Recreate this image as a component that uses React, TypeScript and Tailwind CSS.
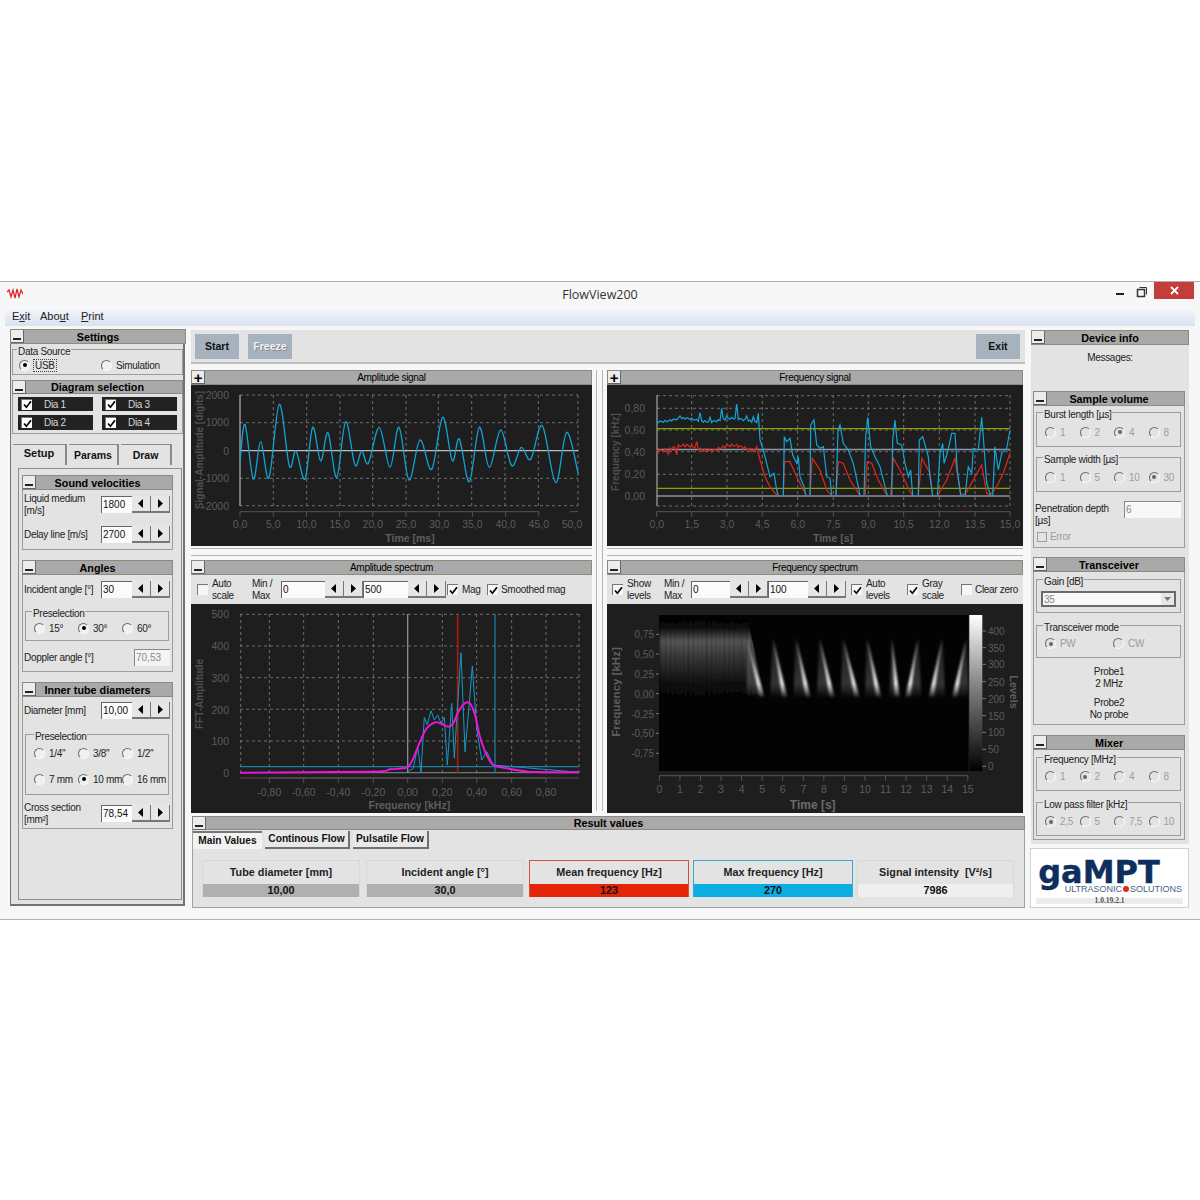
import React from 'react';

type Pt = [number, number];

const panel = 'bg-[#e3e3e3]';

// the plots are drawn in page coordinates, points are read off 3x crops
const fromCrop = (ox: number, oy: number, pts: Pt[]): Pt[] => pts.map(([x, y]) => [x / 3 + ox, y / 3 + oy]);
const line = (pts: Pt[]) => pts.map(([x, y]) => `${x.toFixed(1)},${y.toFixed(1)}`).join(' ');

const smooth = (pts: Pt[]) => {
  let d = `M${pts[0][0].toFixed(1)} ${pts[0][1].toFixed(1)}`;
  for (let i = 0; i < pts.length - 1; i++) {
    const p0 = pts[i - 1] || pts[i];
    const p1 = pts[i];
    const p2 = pts[i + 1];
    const p3 = pts[i + 2] || p2;
    const c1: Pt = [p1[0] + (p2[0] - p0[0]) / 6, p1[1] + (p2[1] - p0[1]) / 6];
    const c2: Pt = [p2[0] - (p3[0] - p1[0]) / 6, p2[1] - (p3[1] - p1[1]) / 6];
    d += `C${c1[0].toFixed(1)} ${c1[1].toFixed(1)} ${c2[0].toFixed(1)} ${c2[1].toFixed(1)} ${p2[0].toFixed(1)} ${p2[1].toFixed(1)}`;
  }
  return d;
};

const noisy = (from: number, to: number, base: number, amp: number, spikes: Pt[] = []): Pt[] => {
  const out: Pt[] = [];
  for (let x = from; x < to; x += 5) {
    const s = spikes.find((p) => Math.abs(p[0] - x) < 3);
    out.push([x, s ? s[1] : base + amp * (Math.sin(x * 1.3) + 0.6 * Math.sin(x * 0.47 + 1))]);
  }
  return out;
};

const ampSignal: Pt[] = [[150,395],[165,283],[190,447],[212,335],[237,443],[268,223],[298,408],[318,363],[345,447],[368,292],[392,393],[414,308],[440,442],[467,275],[495,405],[515,363],[535,400],[568,292],[600,412],[627,292],[657,450],[690,330],[725,418],[758,262],[787,392],[808,327],[838,455],[868,292],[898,412],[932,300],[965,407],[994,352],[1022,388],[1057,287],[1097,458],[1130,307],[1165,432]];

const freqBlue: Pt[] = [
  ...noisy(170, 475, 270, 5, [[240,258],[298,248],[330,262],[365,235],[378,258],[408,222],[440,258],[462,260]]),
  [475,250],[480,330],[490,360],[500,400],[510,440],[522,430],[530,480],[535,498],[550,498],[553,320],[560,335],[570,325],[578,375],[590,400],[595,380],[600,440],[612,470],[618,498],[630,498],[632,285],[642,270],[650,345],[660,355],[670,350],[680,440],[690,445],[695,498],[708,498],[714,300],[720,285],[730,340],[745,360],[760,400],[775,470],[780,498],[792,498],[797,320],[803,262],[812,350],[825,380],[840,410],[855,470],[862,498],[875,498],[878,330],[885,270],[892,340],[905,345],[915,400],[925,440],[932,420],[938,498],[955,498],[958,330],[968,320],[985,380],[990,440],[998,498],[1012,498],[1020,370],[1028,340],[1032,400],[1042,370],[1055,310],[1065,310],[1072,420],[1082,498],[1095,498],[1105,410],[1115,430],[1120,355],[1135,360],[1145,262],[1150,320],[1160,460],[1172,498],[1178,498],[1185,350],[1195,420],[1205,370],[1220,355],[1230,300],
];

const freqRed: Pt[] = [
  ...noisy(170, 470, 354, 8, [[290,335],[232,375],[205,372]]),
  [470,350],[480,390],[495,440],[510,470],[525,490],[535,498],[550,498],[553,395],[570,395],[590,440],[610,480],[620,498],[630,498],[637,385],[660,420],[680,480],[695,498],[708,498],[715,395],[730,400],[750,450],[775,490],[785,498],[795,498],[802,395],[815,400],[835,450],[860,495],[872,498],[880,385],[900,420],[930,485],[940,498],[955,498],[965,385],[990,430],[998,498],[1012,498],[1040,450],[1065,385],[1070,420],[1082,490],[1095,495],[1120,450],[1145,405],[1160,490],[1170,495],[1190,470],[1210,430],[1230,370],
];

const fftMag: Pt[] = [[150,653],[540,650],[600,643],[640,640],[655,635],[670,610],[690,560],[710,520],[735,502],[755,507],[775,515],[790,505],[805,470],[825,445],[840,445],[855,480],[870,545],[890,600],[910,630],[950,640],[1000,648],[1040,651],[1167,652]];
const fftRaw: Pt[] = [[655,650],[670,640],[683,575],[693,653],[703,487],[712,510],[723,467],[733,495],[743,480],[753,505],[763,487],[772,630],[785,445],[793,610],[803,445],[813,293],[825,590],[835,480],[847,333],[860,520],[875,615],[890,590],[910,630],[1167,652]];

// peak, foot and far edge of each pulse in the spectrogram, crop coordinates
const pulses: [number, number, number][] = [[440,490,440],[518,558,510],[587,628,580],[658,700,650],[728,775,722],[800,840,795],[875,895,868],[955,920,965],[1028,990,1036],[1100,1060,1106]];

function Minus() {
  return (
    <div className="w-[13px] h-[13px] bg-[#ececec] border-r border-b border-[#666] flex items-end justify-center pb-[2px] shrink-0">
      <div className="w-[8px] h-[2px] bg-[#222]" />
    </div>
  );
}

function Plus() {
  return <div className="w-[13px] h-[13px] bg-[#ececec] border-r border-b border-[#666] flex items-center justify-center shrink-0 text-[15px] leading-none font-bold text-black">+</div>;
}

function Header({ title, bold = true, plus = false, size = 'h-[15px]' }: { title: string; bold?: boolean; plus?: boolean; size?: string }) {
  return (
    <div className={`${size} bg-[#a9a9a9] border border-[#8f8a80] flex items-center text-black ${bold ? 'font-bold text-[10.8px] tracking-normal' : 'text-[10px]'}`}>
      {plus ? <Plus /> : <Minus />}
      <div className="flex-1 text-center pr-[13px] pt-[1px] leading-none whitespace-nowrap">{title}</div>
    </div>
  );
}

function Radio({ on = false, off = false }: { on?: boolean; off?: boolean }) {
  return (
    <span className={`w-[11px] h-[11px] rounded-full border flex items-center justify-center shrink-0 border-t-[#6a6a6a] border-l-[#6a6a6a] border-r-[#f8f8f8] border-b-[#f8f8f8] ${off ? 'bg-[#e3e3e3]' : 'bg-[#f0f0f0]'}`}>
      {on && <span className={`w-[4px] h-[4px] rounded-full ${off ? 'bg-[#666]' : 'bg-black'}`} />}
    </span>
  );
}

function Option({ label, on = false, off = false, focus = false, w = 'w-[44px]' }: { label: string; on?: boolean; off?: boolean; focus?: boolean; w?: string }) {
  return (
    <div className={`${w} flex items-center gap-[4px] shrink-0 ${off ? 'text-[#9c9c9c]' : 'text-[#222]'}`}>
      <Radio on={on} off={off} />
      <span className={`whitespace-nowrap ${focus ? 'border border-dotted border-[#444] px-[1px] leading-[11px] ml-[-1px]' : ''}`}>{label}</span>
    </div>
  );
}

function Check({ on = true, dark = false }: { on?: boolean; dark?: boolean }) {
  return (
    <span className={`w-[11px] h-[11px] shrink-0 flex items-center justify-center border-t border-l border-[#777] ${dark ? 'bg-white' : 'bg-[#f6f6f6]'}`}>
      {on && (
        <svg width="9" height="9" viewBox="0 0 9 9" fill="none" stroke="#000" strokeWidth="1.7">
          <path d="M1 4.5 3.4 7.2 8 1.2" />
        </svg>
      )}
    </span>
  );
}

function Arrow({ right = false }: { right?: boolean }) {
  return (
    <svg width="6" height="9" viewBox="0 0 6 9" fill="#000">
      <polygon points={right ? '1,0 6,4.5 1,9' : '5,0 0,4.5 5,9'} />
    </svg>
  );
}

function Spin({ value, w = 'w-[31px]', h = 'h-[17px]' }: { value: string; w?: string; h?: string }) {
  return (
    <div className={`flex ${h} shrink-0`}>
      <div className={`${w} bg-[#fbfbfb] border-t border-l border-[#666] pl-[1px] text-[#111] leading-[15px] tracking-normal`}>{value}</div>
      <div className="w-[19px] bg-[#e6e6e6] border-b-2 border-r border-[#777] flex items-center justify-center"><Arrow /></div>
      <div className="w-[19px] bg-[#e6e6e6] border-b-2 border-r border-[#777] flex items-center justify-center"><Arrow right /></div>
    </div>
  );
}

function Group({ label, className, left = 'left-[6px]', children }: { label: string; className: string; left?: string; children?: React.ReactNode }) {
  return (
    <div className={`relative border border-[#9c9c9c] ${className}`}>
      <span className={`absolute top-[-4px] ${left} ${panel} px-[1px] leading-[12px] text-[#222] whitespace-nowrap`}>{label}</span>
      {children}
    </div>
  );
}

function Row({ label, children, className = '' }: { label: React.ReactNode; children: React.ReactNode; className?: string }) {
  return (
    <div className={`flex items-center h-[17px] ${className}`}>
      <div className="w-[78px] shrink-0 pl-[1px] leading-[12px] text-[#222] whitespace-nowrap">{label}</div>
      {children}
    </div>
  );
}

function Section({ title, className, children }: { title: string; className: string; children: React.ReactNode }) {
  return (
    <div className={`border-x border-b border-[#9c9c9c] ${className}`}>
      <div className="mx-[-1px]"><Header title={title} /></div>
      {children}
    </div>
  );
}

function Chart({ title, plus = false, controls, h, vb, children }: { title: string; plus?: boolean; controls?: React.ReactNode; h: string; vb: string; children: React.ReactNode }) {
  const [, , w, vh] = vb.split(' ');
  return (
    <div className={`${h} flex flex-col`}>
      <Header title={title} bold={false} plus={plus} />
      {controls && <div className={`h-[29px] ${panel} flex items-center`}>{controls}</div>}
      <svg width={w} height={vh} viewBox={vb} className="block bg-[#1e1e1e] tracking-normal">
        {children}
      </svg>
    </div>
  );
}

const tick = '#5c5c5c';

function Ticks({ xs, y, labels, ly }: { xs: number[]; y: number; labels: string[]; ly: number }) {
  return (
    <g>
      <line x1={xs[0]} x2={xs[xs.length - 1]} y1={y} y2={y} stroke="#555" />
      {xs.map((x, i) => (
        <g key={i}>
          <line x1={x} x2={x} y1={y} y2={y + 5} stroke="#555" />
          <text x={x} y={ly} fill={tick} fontSize="10.5" textAnchor="middle">{labels[i]}</text>
        </g>
      ))}
    </g>
  );
}

function Grid({ xs, ys, x1, x2, y1, y2 }: { xs: number[]; ys: number[]; x1: number; x2: number; y1: number; y2: number }) {
  return (
    <g stroke="#6e6e6e" strokeDasharray="3 3">
      {xs.map((x) => <line key={x} x1={x} x2={x} y1={y1} y2={y2} />)}
      {ys.map((y) => <line key={y} x1={x1} x2={x2} y1={y} y2={y} />)}
    </g>
  );
}

function AmplitudeSignal() {
  const xs = [273.3, 306.7, 340, 372.7, 406, 438.3, 471.7, 505, 538.3, 578];
  const ys = [395, 422.7, 478.3, 505.7];
  const ticks = [240, ...xs.slice(0, 9).map((_, i) => 240 + (i + 1) * 33.2), 578];
  return (
    <>
      <Grid xs={xs} ys={ys} x1={240} x2={578} y1={395} y2={506} />
      <line x1={240} x2={578} y1={450.7} y2={450.7} stroke="#bdbdbd" strokeWidth="1.2" />
      <line x1={240} x2={240} y1={395} y2={506} stroke="#cfcfcf" />
      {[['2000', 399], ['1000', 426], ['0', 455], ['-1000', 482], ['-2000', 510]].map(([t, y]) => (
        <text key={t} x={229} y={y} fill={tick} fontSize="10.5" textAnchor="end">{t}</text>
      ))}
      <text transform="translate(203 450) rotate(-90)" fill="#4f4f4f" fontSize="10" fontWeight="700" textAnchor="middle">Signal-Amplitude [digits]</text>
      <Ticks xs={ticks.slice(0, 10)} y={511.7} labels={['0,0', '5,0', '10,0', '15,0', '20,0', '25,0', '30,0', '35,0', '40,0', '45,0']} ly={528} />
      <text x={572} y={528} fill={tick} fontSize="10.5" textAnchor="middle">50,0</text>
      <line x1={570} x2={578} y1={511.7} y2={511.7} stroke="#555" />
      <text x={410} y={542} fill="#5e5e5e" fontSize="10.5" fontWeight="700" textAnchor="middle">Time [ms]</text>
      <path d={smooth(fromCrop(190, 330, ampSignal))} fill="none" stroke="#11a3d6" strokeWidth="1.3" />
    </>
  );
}

function FrequencySignal() {
  const xs = [691.7, 727, 762.3, 797.7, 833.3, 868.3, 903.7, 939.3, 975, 1010];
  const ys = [395.7, 408.3, 430, 451.7, 474.3, 506];
  const labels = ['0,0', '1,5', '3,0', '4,5', '6,0', '7,5', '9,0', '10,5', '12,0', '13,5', '15,0'];
  return (
    <>
      <Grid xs={xs} ys={ys} x1={657} x2={1010} y1={395} y2={506} />
      <line x1={657} x2={657} y1={395} y2={506} stroke="#bdbdbd" />
      {[['0,80', 412], ['0,60', 434], ['0,40', 456], ['0,20', 478], ['0,00', 500]].map(([t, y]) => (
        <text key={t} x={645} y={y} fill={tick} fontSize="10.5" textAnchor="end">{t}</text>
      ))}
      <text transform="translate(619 452) rotate(-90)" fill="#4f4f4f" fontSize="10" fontWeight="700" textAnchor="middle">Frequency [kHz]</text>
      <Ticks xs={[656.7, ...xs]} y={511.7} labels={labels} ly={528} />
      <text x={833} y={542} fill="#5e5e5e" fontSize="10.5" fontWeight="700" textAnchor="middle">Time [s]</text>
      <line x1={657} x2={1010} y1={428.7} y2={428.7} stroke="#8da400" strokeWidth="1.2" />
      <line x1={657} x2={1010} y1={488.3} y2={488.3} stroke="#8da400" strokeWidth="1.2" />
      <line x1={657} x2={1010} y1={449.5} y2={449.5} stroke="#8d97ad" strokeWidth="1.4" />
      <line x1={657} x2={1010} y1={496} y2={496} stroke="#c8c8c8" strokeWidth="1.2" />
      <polyline points={line(fromCrop(600, 330, freqRed))} fill="none" stroke="#e0281a" strokeWidth="1.2" />
      <polyline points={line(fromCrop(600, 330, freqBlue))} fill="none" stroke="#14a5d8" strokeWidth="1.2" />
    </>
  );
}

function AmplitudeSpectrum() {
  const z = (v: number) => v / 3 + 190;
  const xs = [238, 341, 445, 550, 757, 860, 965, 1068].map(z);
  const ticks = [238, 341, 445, 550, 653, 757, 860, 965, 1068].map(z);
  return (
    <>
      <Grid xs={[240.7, ...xs, 579]} ys={[614.3, 646, 677.7, 709.3, 741]} x1={240} x2={579} y1={614} y2={773} />
      <line x1={240} x2={579} y1={772.7} y2={772.7} stroke="#8a8a8a" />
      <line x1={z(653)} x2={z(653)} y1={614} y2={773} stroke="#8e8e8e" strokeWidth="1.3" />
      <line x1={z(803)} x2={z(803)} y1={614} y2={773} stroke="#b01a08" strokeWidth="1.6" />
      <line x1={z(915)} x2={z(915)} y1={614} y2={773} stroke="#1b7fa3" strokeWidth="1.3" />
      <line x1={240} x2={579} y1={766.7} y2={766.7} stroke="#1b7fa3" strokeWidth="1.2" />
      {[['500', 618], ['400', 650], ['300', 682], ['200', 714], ['100', 745], ['0', 777]].map(([t, y]) => (
        <text key={t} x={229} y={y} fill={tick} fontSize="10.5" textAnchor="end">{t}</text>
      ))}
      <text transform="translate(203 694) rotate(-90)" fill="#4f4f4f" fontSize="10" fontWeight="700" textAnchor="middle">FFT-Amplitude</text>
      <line x1={240} x2={579} y1={778} y2={778} stroke="#555" />
      <Ticks xs={ticks} y={778} labels={['-0,80', '-0,60', '-0,40', '-0,20', '0,00', '0,20', '0,40', '0,60', '0,80']} ly={796} />
      <text x={z(658)} y={809} fill="#5e5e5e" fontSize="10.5" fontWeight="700" textAnchor="middle">Frequency [kHz]</text>
      <polyline points={line(fromCrop(190, 555, fftRaw))} fill="none" stroke="#1398c8" strokeWidth="1" />
      <path d={smooth(fromCrop(190, 555, fftMag))} fill="none" stroke="#f312e0" strokeWidth="1.9" />
    </>
  );
}

function FrequencySpectrum() {
  const zx = (v: number) => v / 3 + 600;
  const zy = (v: number) => v / 3 + 555;
  const streaks = Array.from({ length: 106 }, (_, i) => i);
  return (
    <>
      <defs>
        <linearGradient id="streak" gradientUnits="userSpaceOnUse" x1="0" x2="0" y1="618" y2="700">
          <stop offset="0" stopColor="#050505" />
          <stop offset="0.12" stopColor="#151515" />
          <stop offset="0.28" stopColor="#8c8c8c" />
          <stop offset="0.5" stopColor="#555" />
          <stop offset="0.8" stopColor="#171717" />
          <stop offset="1" stopColor="#050505" />
        </linearGradient>
        <linearGradient id="fin" gradientUnits="userSpaceOnUse" x1="0" x2="0" y1="632" y2="698">
          <stop offset="0" stopColor="#fff" stopOpacity="0" />
          <stop offset="0.3" stopColor="#8a8a8a" />
          <stop offset="0.78" stopColor="#e4e4e4" />
          <stop offset="1" stopColor="#fff" stopOpacity="0" />
        </linearGradient>
        <linearGradient id="levels" x1="0" x2="0" y1="0" y2="1">
          <stop offset="0" stopColor="#fff" />
          <stop offset="0.4" stopColor="#909090" />
          <stop offset="1" stopColor="#000" />
        </linearGradient>
        <clipPath id="plateau">
          <polygon points={`${zx(177)},${zy(180)} ${zx(440)},${zy(180)} ${zx(495)},${zy(430)} ${zx(177)},${zy(430)}`} />
        </clipPath>
        <filter id="soft" x="-50%" y="-30%" width="200%" height="160%"><feGaussianBlur stdDeviation="1.1" /></filter>
        <filter id="softer" x="-5%" y="-5%" width="110%" height="110%"><feGaussianBlur stdDeviation="0.8" /></filter>
      </defs>
      <rect x={659} y={615} width={309.5} height={156} fill="#030303" />
      <g clipPath="url(#plateau)">
        <g filter="url(#softer)">
          {streaks.map((i) => (
            <rect key={i} x={659 + i} y={618} width={1} height={82} fill="url(#streak)" opacity={0.35 + 0.55 * Math.abs(Math.sin(i * 1.9) * Math.cos(i * 0.7))} />
          ))}
        </g>
      </g>
      <g filter="url(#soft)" fill="url(#fin)">
        {pulses.map(([peak, foot, edge]) => (
          <g key={peak}>
            <polygon points={`${zx(edge)},${zy(430)} ${zx(peak)},${zy(255)} ${zx(foot)},${zy(430)}`} opacity="0.22" />
            <polygon points={`${zx(peak)},${zy(245)} ${zx(foot + (foot > peak ? 5 : -5))},${zy(430)} ${zx(foot + (foot > peak ? -11 : 11))},${zy(430)}`} />
          </g>
        ))}
      </g>
      <rect x={969.3} y={615} width={13} height={156} fill="url(#levels)" />
      {[['400', 228], ['350', 278], ['300', 328], ['250', 380], ['200', 431], ['150', 482], ['100', 532], ['50', 583], ['0', 634]].map(([t, y]) => (
        <g key={t}>
          <line x1={982} x2={986} y1={zy(Number(y))} y2={zy(Number(y))} stroke="#777" />
          <text x={988} y={zy(Number(y)) + 4} fill={tick} fontSize="10">{t}</text>
        </g>
      ))}
      <text transform="translate(1010 692) rotate(90)" fill="#5e5e5e" fontSize="10.7" fontWeight="700" textAnchor="middle">Levels</text>
      {[['0,75', 238], ['0,50', 297], ['0,25', 357], ['0,00', 416], ['-0,25', 476], ['-0,50', 535], ['-0,75', 595]].map(([t, y]) => (
        <g key={t}>
          <line x1={656} x2={659} y1={zy(Number(y))} y2={zy(Number(y))} stroke="#777" />
          <text x={654} y={zy(Number(y)) + 4} fill={tick} fontSize="10" textAnchor="end">{t}</text>
        </g>
      ))}
      <text transform="translate(620 692) rotate(-90)" fill="#5e5e5e" fontSize="11.5" fontWeight="700" textAnchor="middle">Frequency [kHz]</text>
      <Ticks xs={Array.from({ length: 16 }, (_, i) => zx(178 + i * 61.7))} y={775.7} labels={Array.from({ length: 16 }, (_, i) => String(i))} ly={793} />
      <text x={zx(638)} y={809} fill="#6a6a6a" fontSize="12" fontWeight="700" textAnchor="middle">Time [s]</text>
    </>
  );
}

function Tab({ label, active = false, w }: { label: string; active?: boolean; w: string }) {
  return (
    <div className={`${w} h-[21px] border-r-2 border-t border-[#8a8a8a] flex items-center justify-center font-bold text-[#111] tracking-normal ${active ? 'text-[11px] pb-[3px]' : 'text-[10.5px] pt-[2px]'}`}>
      {label}
    </div>
  );
}

function Result({ label, value, box, valueBox, w }: { label: string; value: string; box: string; valueBox: string; w: string }) {
  return (
    <div className={`${w} h-[37px] border-t border-x flex flex-col shrink-0 font-bold text-[10.8px] tracking-normal ${box}`}>
      <div className="flex-1 flex items-center justify-center text-[#222] whitespace-pre">{label}</div>
      <div className={`h-[13px] flex items-center justify-center text-[#111] ${valueBox}`}>{value}</div>
    </div>
  );
}

function ResultTab({ label, w, active = false }: { label: string; w: string; active?: boolean }) {
  return (
    <div className={`${w} h-[18px] flex items-center justify-center font-bold text-[10.2px] tracking-normal text-[#111] shrink-0 ${active ? 'bg-[#f2f2f2] border-t-2 border-[#777]' : 'bg-[#e8e8e8] border-r-2 border-b-2 border-[#707070]'}`}>{label}</div>
  );
}

function DiaToggle({ label }: { label: string }) {
  return (
    <div className="bg-[#222] h-full flex items-center pl-[3px] text-[#d8d8d8]">
      <Check dark />
      <span className="ml-[12px]">{label}</span>
    </div>
  );
}

function LeftColumn() {
  return (
    <div className="w-[177px] shrink-0">
      <div className="ml-[1px] w-[176px]"><Header title="Settings" /></div>
      <div className={`flow-root ml-[1px] w-[175px] h-[562px] ${panel} border-l border-r-2 border-b-2 border-[#6f7478]`}>
        <Group label="Data Source" left="left-[4px]" className="ml-[1px] mt-[5px] w-[171px] h-[26px] flex items-center pl-[6px] pt-[6px]">
          <Option label="USB" on focus w="w-[82px]" />
          <Option label="Simulation" />
        </Group>
        <div className="ml-[1px] mt-[5px] w-[171px]"><Header title="Diagram selection" size="h-[14px]" /></div>
        <div className="ml-[1px] w-[171px] h-[40px] border-x border-b border-[#9c9c9c] pt-[3px] pl-[5px] grid grid-cols-[75px_75px] grid-rows-[14px_15px] gap-x-[9px] gap-y-[4px]">
          <DiaToggle label="Dia 1" />
          <DiaToggle label="Dia 3" />
          <DiaToggle label="Dia 2" />
          <DiaToggle label="Dia 4" />
        </div>
        <div className="ml-[2px] mt-[10px] flex gap-[2px]">
          <Tab label="Setup" active w="w-[54px]" />
          <Tab label="Params" w="w-[50px]" />
          <Tab label="Draw" w="w-[51px]" />
        </div>
        <div className="ml-[7px] mt-[3px] w-[164px] h-[432px] border border-[#8d8d8d] pt-[6px] pl-[3px]">
          <Section title="Sound velocities" className="w-[151px] h-[75px]">
            <Row label={<>Liquid medium<br />[m/s]</>} className="mt-[6px]"><Spin value="1800" /></Row>
            <Row label="Delay line [m/s]" className="mt-[13px]"><Spin value="2700" /></Row>
          </Section>
          <Section title="Angles" className="w-[151px] h-[112px] mt-[10px]">
            <Row label="Incident angle [°]" className="mt-[6px]"><Spin value="30" /></Row>
            <Group label="Preselection" className="ml-[2px] mt-[13px] w-[144px] h-[30px] flex items-center pl-[8px] pt-[4px]">
              <Option label="15°" />
              <Option label="30°" on />
              <Option label="60°" />
            </Group>
            <div className="flex items-center mt-[8px] h-[17px]">
              <span className="pl-[1px] text-[#222] w-[111px]">Doppler angle [°]</span>
              <div className="w-[36px] h-[17px] bg-[#f4f4f4] border-t border-l border-[#888] pl-[1px] text-[#8c8c8c] leading-[15px] tracking-normal">70,53</div>
            </div>
          </Section>
          <Section title="Inner tube diameters" className="w-[151px] h-[147px] mt-[10px]">
            <Row label="Diameter [mm]" className="mt-[5px]"><Spin value="10,00" /></Row>
            <Group label="Preselection" left="left-[8px]" className="ml-[2px] mt-[15px] w-[144px] h-[61px] pl-[8px] pt-[11px]">
              <div className="flex h-[14px]">
                <Option label={'1/4"'} />
                <Option label={'3/8"'} />
                <Option label={'1/2"'} />
              </div>
              <div className="flex h-[14px] mt-[12px]">
                <Option label="7 mm" />
                <Option label="10 mm" on />
                <Option label="16 mm" />
              </div>
            </Group>
            <Row label={<>Cross section<br />[mm²]</>} className="mt-[10px]"><Spin value="78,54" /></Row>
          </Section>
        </div>
      </div>
    </div>
  );
}

function MiddleColumn() {
  return (
    <div className="w-[834px] shrink-0 pt-[1px]">
      <div className={`h-[34px] ${panel} border-b-2 border-[#bdbdbd] flex pt-[4px] pl-[4px] pr-[5px] font-bold text-[10.5px] tracking-normal`}>
        <div className="w-[44px] h-[25px] pt-[1px] bg-[#a6b2bd] flex items-center justify-center text-[#111]">Start</div>
        <div className="w-[44px] h-[25px] pt-[1px] bg-[#a6b2bd] ml-[9px] flex items-center justify-center text-[#f2f2f2] [text-shadow:1px_1px_0_#8a8a8a]">Freeze</div>
        <div className="w-[44px] h-[25px] pt-[1px] bg-[#a6b2bd] ml-auto flex items-center justify-center text-[#111]">Exit</div>
      </div>
      <div className="mt-[6px] flex">
        <div className="w-[401px]">
          <Chart title="Amplitude signal" plus h="h-[176px]" vb="191 385 401 161"><AmplitudeSignal /></Chart>
          <div className="h-[14px] pt-[2px]"><div className="h-[8px] border-y border-[#b5b5b5]" /></div>
          <Chart
            title="Amplitude spectrum"
            h="h-[253px]"
            vb="191 604 401 209"
            controls={
              <div className="flex items-center pl-[6px] w-full">
                <Check on={false} />
                <span className="ml-[4px] w-[40px] leading-[12px]">Auto<br />scale</span>
                <span className="w-[29px] leading-[12px]">Min /<br />Max</span>
                <Spin value="0" w="w-[44px]" />
                <Spin value="500" w="w-[45px]" />
                <span className="ml-[1px]"><Check /></span>
                <span className="ml-[4px] w-[25px]">Mag</span>
                <Check />
                <span className="ml-[3px] whitespace-nowrap">Smoothed mag</span>
              </div>
            }
          >
            <AmplitudeSpectrum />
          </Chart>
        </div>
        <div className="w-[15px] px-[4px]"><div className="h-[441px] border-x border-[#b5b5b5]" /></div>
        <div className="w-[416px]">
          <Chart title="Frequency signal" plus h="h-[176px]" vb="607 385 416 161"><FrequencySignal /></Chart>
          <div className="h-[14px] pt-[2px]"><div className="h-[8px] border-y border-[#b5b5b5]" /></div>
          <Chart
            title="Frequency spectrum"
            h="h-[253px]"
            vb="607 604 416 209"
            controls={
              <div className="flex items-center pl-[5px] w-full">
                <Check />
                <span className="ml-[4px] w-[37px] leading-[12px]">Show<br />levels</span>
                <span className="w-[27px] leading-[12px]">Min /<br />Max</span>
                <Spin value="0" w="w-[39px]" />
                <Spin value="100" w="w-[40px]" />
                <span className="ml-[5px]"><Check /></span>
                <span className="ml-[4px] w-[41px] leading-[12px]">Auto<br />levels</span>
                <Check />
                <span className="ml-[4px] w-[39px] leading-[12px]">Gray<br />scale</span>
                <Check on={false} />
                <span className="ml-[3px] whitespace-nowrap">Clear zero</span>
              </div>
            }
          >
            <FrequencySpectrum />
          </Chart>
        </div>
      </div>
      <div className="mt-[3px] ml-[1px] w-[833px]">
        <Header title="Result values" size="h-[14px]" />
        <div className={`h-[78px] ${panel} border-x border-b border-[#a0a0a0]`}>
          <div className="flex pt-[1px] gap-[3px]">
            <ResultTab label="Main Values" w="w-[69px]" active />
            <ResultTab label="Continous Flow" w="w-[85px]" />
            <ResultTab label="Pulsatile Flow" w="w-[76px]" />
          </div>
          <div className="flex mt-[11px] pl-[9px]">
            <Result label="Tube diameter [mm]" value="10,00" w="w-[158px]" box="border-[#d8d8d8]" valueBox="bg-[#b0b0b0]" />
            <Result label="Incident angle [°]" value="30,0" w="w-[158px] ml-[6px]" box="border-[#d8d8d8]" valueBox="bg-[#b0b0b0]" />
            <Result label="Mean frequency [Hz]" value="123" w="w-[160px] ml-[5px]" box="border-[#d9503a]" valueBox="bg-[#e42507]" />
            <Result label="Max frequency [Hz]" value="270" w="w-[160px] ml-[4px]" box="border-[#3aa9cf]" valueBox="bg-[#0aaee2]" />
            <Result label="Signal intensity  [V²/s]" value="7986" w="w-[157px] ml-[4px]" box="border-[#d8d8d8]" valueBox="bg-[#efefef]" />
          </div>
        </div>
      </div>
    </div>
  );
}

function RightOptions({ items, on }: { items: string[]; on: number }) {
  return (
    <div className="flex pl-[8px] pt-[5px] h-full items-center">
      {items.map((t, i) => <Option key={t} label={t} on={i === on} off w="w-[34.5px]" />)}
    </div>
  );
}

function RightColumn() {
  return (
    <div className="w-[158px] shrink-0 pt-[1px]">
      <div className={`${panel} h-[514px]`}>
        <Header title="Device info" />
        <div className="h-[46px] pt-[5px] text-center text-[#222]">Messages:</div>
        <Section title="Sample volume" className="ml-[2px] w-[152px] h-[157px]">
          <Group label="Burst length [µs]" className="ml-[2px] mt-[6px] w-[145px] h-[35px]">
            <RightOptions items={['1', '2', '4', '8']} on={2} />
          </Group>
          <Group label="Sample width [µs]" className="ml-[2px] mt-[10px] w-[145px] h-[35px]">
            <RightOptions items={['1', '5', '10', '30']} on={3} />
          </Group>
          <div className="flex mt-[9px] h-[24px]">
            <span className="pl-[1px] w-[90px] leading-[12px] pt-[2px] text-[#222] whitespace-nowrap">Penetration depth<br />[µs]</span>
            <div className="w-[57px] h-[17px] bg-[#f8f8f8] border-t border-l border-[#888] pl-[1px] text-[#888] leading-[15px]">6</div>
          </div>
          <div className="flex items-center gap-[3px] mt-[4px] ml-[3px] text-[#9c9c9c]">
            <span className="w-[10px] h-[10px] border border-[#9c9c9c]" />
            <span>Error</span>
          </div>
        </Section>
        <Section title="Transceiver" className="ml-[2px] mt-[9px] w-[152px] h-[168px]">
          <Group label="Gain [dB]" className="ml-[2px] mt-[7px] w-[145px] h-[34px] pl-[4px] pt-[11px]">
            <div className="w-[135px] h-[16px] bg-[#f8f8f8] border-2 border-[#6a6a6a] flex items-center pl-[1px] text-[#888]">
              <span className="flex-1">35</span>
              <span className="w-[13px] h-full bg-[#e6e6e6] flex items-center justify-center">
                <svg width="7" height="4" viewBox="0 0 7 4" fill="#777"><polygon points="0,0 7,0 3.5,4" /></svg>
              </span>
            </div>
          </Group>
          <Group label="Transceiver mode" className="ml-[2px] mt-[12px] w-[145px] h-[33px] flex items-center pl-[8px] pt-[4px]">
            <Option label="PW" on off w="w-[68px]" />
            <Option label="CW" off />
          </Group>
          <div className="mt-[8px] text-center leading-[12px] text-[#222]">
            Probe1<br />2 MHz
            <div className="mt-[7px]">Probe2<br />No probe</div>
          </div>
        </Section>
        <Section title="Mixer" className="ml-[2px] mt-[10px] w-[152px] h-[105px]">
          <Group label="Frequency [MHz]" className="ml-[2px] mt-[7px] w-[145px] h-[34px]">
            <RightOptions items={['1', '2', '4', '8']} on={1} />
          </Group>
          <Group label="Low pass filter [kHz]" className="ml-[2px] mt-[11px] w-[145px] h-[34px]">
            <RightOptions items={['2,5', '5', '7,5', '10']} on={0} />
          </Group>
        </Section>
      </div>
      <div className="mt-[4px] ml-[-1px] w-[159px] h-[60px] bg-white border border-[#d0d0d0] flex flex-col items-center overflow-hidden tracking-normal">
        <div className="font-['DejaVu_Sans',sans-serif] font-bold text-[32px] leading-[22px] h-[22px] mt-[12px] ml-[-21px] text-[#0e2f5e] [-webkit-text-stroke:0.4px_#0e2f5e]">gaMPT</div>
        <div className="flex items-center self-end pr-[6px] text-[9px] leading-[8px] text-[#3f6285] whitespace-nowrap mt-[2px] h-[8px]">
          ULTRASONIC<span className="w-[6px] h-[6px] rounded-full bg-[#e0281a] mx-[1px]" />SOLUTIONS
        </div>
        <div className="mt-[5px] w-[147px] h-[6px] bg-[#ececec] flex items-center justify-center font-bold text-[7.5px] leading-none text-[#555] font-['Liberation_Serif',serif]">1.0.19.2.1</div>
      </div>
    </div>
  );
}

export default function App() {
  return (
    <div className="w-[1200px] h-[1200px] bg-white pt-[281px] font-['Liberation_Sans',sans-serif] text-[10px] tracking-[-0.3px] text-[#222]">
      <div className="h-[639px] border-y border-[#b0b0b0] bg-[#f7f7f7]">
        {/* ── TITLE BAR ── */}
        <div className="h-[25px] grid grid-cols-[1fr_auto_1fr] items-start">
          <svg width="16" height="11" viewBox="0 0 16 11" fill="none" stroke="#e02020" strokeWidth="1.2" className="ml-[7px] mt-[6px]">
            <path d="M0 4 2 2 4 9 6 2 8 10 10 1 12 9 14 2 16 6" />
          </svg>
          <div className="text-[12.5px] mt-[4px] text-[#333] tracking-normal font-['Open_Sans',sans-serif]">FlowView200</div>
          <div className="flex justify-end items-start pr-[6px]">
            <svg width="10" height="12" viewBox="0 0 10 12" className="mt-[5px]"><rect x="1" y="6" width="8" height="2" fill="#222" /></svg>
            <svg width="12" height="12" viewBox="0 0 12 12" fill="none" stroke="#333" className="ml-[11px] mt-[4px]">
              <rect x="1.5" y="3.5" width="7" height="7" strokeWidth="1.5" />
              <path d="M3.5 1.5h7v7" />
            </svg>
            <div className="w-[40px] h-[17px] ml-[6px] bg-[#c43c3c] flex items-center justify-center">
              <svg width="9" height="9" viewBox="0 0 9 9" stroke="#fff" strokeWidth="1.8"><path d="M1 1 8 8M8 1 1 8" /></svg>
            </div>
          </div>
        </div>
        {/* ── MENU ── */}
        <div className="mx-[5px] h-[19px] bg-linear-to-b from-[#f6f8fc] to-[#d9e1f0] flex items-center pl-[7px] text-[#222] text-[11px] tracking-normal">
          <span className="w-[28px]">E<u>x</u>it</span>
          <span className="w-[41px]">Abo<u>u</u>t</span>
          <span><u>P</u>rint</span>
        </div>
        {/* ── BODY ── */}
        <div className="flex pt-[3px] pl-[9px] gap-[5px]">
          <LeftColumn />
          <MiddleColumn />
          <div className="ml-[1px]"><RightColumn /></div>
        </div>
      </div>
    </div>
  );
}
